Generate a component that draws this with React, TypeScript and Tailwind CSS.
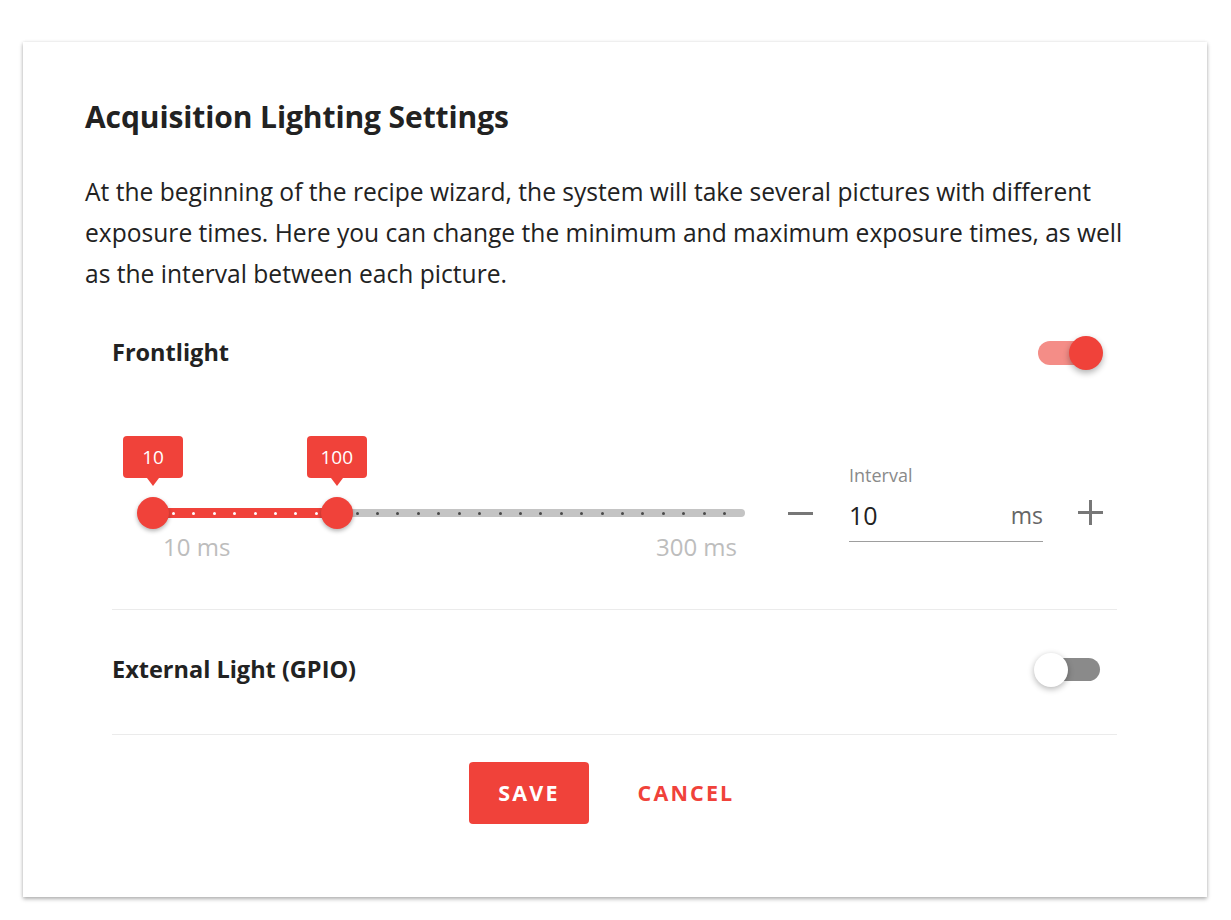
import React from "react";

const MIN = 10;
const MAX = 300;
const STEP = 10;
const LOW = 10;
const HIGH = 100;
const TRACK_W = 592;

function pos(v: number) {
  return ((v - MIN) / (MAX - MIN)) * TRACK_W;
}

function Tip({ value }: { value: number }) {
  return (
    <div
      className="absolute top-0 flex flex-col items-center"
      style={{ left: pos(value) - 30 }}
    >
      <div className="flex h-[42px] w-[60px] items-center justify-center rounded-[4px] bg-[#f0423a] text-[19px] leading-none text-white">
        {value}
      </div>
      <div className="h-0 w-0 border-x-[6px] border-t-[8px] border-x-transparent border-t-[#f0423a]" />
    </div>
  );
}

function Thumb({ value }: { value: number }) {
  return (
    <div
      className="absolute top-[61px] h-[32px] w-[32px] rounded-full bg-[#f0423a] shadow-[0_2px_4px_rgba(0,0,0,0.3)]"
      style={{ left: pos(value) - 16 }}
    />
  );
}

function RangeSlider() {
  const steps = (MAX - MIN) / STEP;
  const dots = [];
  for (let k = 1; k < steps; k++) {
    const v = MIN + k * STEP;
    const inRange = v > LOW && v < HIGH;
    dots.push(
      <div
        key={k}
        className={
          inRange
            ? "absolute top-[75.5px] h-[3px] w-[3px] rounded-full bg-white"
            : "absolute top-[75.5px] h-[3px] w-[3px] rounded-full bg-[#4a4a4a]"
        }
        style={{ left: pos(v) - 1.5 }}
      />
    );
  }
  return (
    <div className="relative ml-[41px] h-[124px] w-[592px] shrink-0">
      <div className="absolute left-0 top-[73px] h-[8px] w-[592px] rounded-full bg-[#c4c4c4]" />
      <div
        className="absolute top-[72px] h-[10px] bg-[#f0423a]"
        style={{ left: pos(LOW), width: pos(HIGH) - pos(LOW) }}
      />
      {dots}
      <Tip value={LOW} />
      <Tip value={HIGH} />
      <Thumb value={LOW} />
      <Thumb value={HIGH} />
      <div className="absolute left-[10px] top-[97px] text-[24px] leading-[28px] text-[#bdbdbd]">
        10 ms
      </div>
      <div className="absolute right-[8px] top-[97px] text-[24px] leading-[28px] text-[#bdbdbd]">
        300 ms
      </div>
    </div>
  );
}

function ToggleOn() {
  return (
    <div className="relative h-[34px] w-[65px]">
      <div className="absolute left-0 top-[5px] h-[24px] w-[58px] rounded-full bg-[#f48d87]" />
      <div className="absolute right-0 top-0 h-[34px] w-[34px] rounded-full bg-[#f0423a] shadow-[0_3px_6px_rgba(0,0,0,0.3)]" />
    </div>
  );
}

function ToggleOff() {
  return (
    <div className="relative h-[34px] w-[66px]">
      <div className="absolute right-0 top-[5px] h-[23px] w-[58px] rounded-full bg-[#8a8a8a]" />
      <div className="absolute left-0 top-0 h-[34px] w-[34px] rounded-full bg-white shadow-[0_2px_6px_rgba(0,0,0,0.3)]" />
    </div>
  );
}

export default function App() {
  return (
    <div
      className="min-h-[920px] bg-white px-[23px] pt-[42px]"
      style={{ fontFamily: "'Open Sans', Lato, sans-serif" }}
    >
      <div className="h-[855px] w-[1184px] bg-white px-[62px] pt-[57px] shadow-[0_2px_4px_rgba(0,0,0,0.3),0_0_3px_rgba(0,0,0,0.08)]">
        <h1 className="text-[30px] font-bold leading-[36px] tracking-[-0.1px] text-[#222]">
          Acquisition Lighting Settings
        </h1>
        <p className="mt-[36px] whitespace-nowrap text-[24.6px] leading-[41px] text-[#222]">
          At the beginning of the recipe wizard, the system will take several pictures with different
          <br />
          exposure times. Here you can change the minimum and maximum exposure times, as well
          <br />
          as the interval between each picture.
        </p>
        <div className="pl-[27px] pr-[28px]">
          <div className="mt-[39px] flex h-[40px] items-center justify-between">
            <span className="text-[23.5px] font-bold text-[#222]">Frontlight</span>
            <div className="mr-[14px]">
              <ToggleOn />
            </div>
          </div>
          <div className="mt-[63px] flex items-start">
            <RangeSlider />
            <div className="ml-[43px] mt-[76px] h-[3px] w-[25px] bg-[#777]" />
            <div className="ml-[36px] mt-[27px] w-[194px]">
              <div className="text-[18px] leading-[24px] text-[#8a8a8a]">Interval</div>
              <div className="mt-[12px] flex items-center justify-between border-b border-[#9e9e9e] pb-[10px]">
                <span className="text-[25px] leading-[32px] text-[#222]">10</span>
                <span className="text-[23px] leading-[32px] text-[#666]">ms</span>
              </div>
            </div>
            <svg className="ml-[35px] mt-[64px]" width="25" height="25" viewBox="0 0 25 25">
              <rect x="0" y="11" width="25" height="3" fill="#777" />
              <rect x="11" y="0" width="3" height="25" fill="#777" />
            </svg>
          </div>
          <div className="mt-[49px] h-px bg-[#ebebeb]" />
          <div className="mt-[40px] flex h-[40px] items-center justify-between">
            <span className="text-[23.5px] font-bold text-[#222]">External Light (GPIO)</span>
            <div className="mr-[17px]">
              <ToggleOff />
            </div>
          </div>
          <div className="mt-[44px] h-px bg-[#ebebeb]" />
        </div>
        <div className="mt-[27px] flex justify-center gap-[22px]">
          <button className="flex h-[62px] w-[120px] items-center justify-center rounded-[4px] bg-[#f0423a] text-[21.5px] font-bold tracking-[0.1em] text-white">
            SAVE
          </button>
          <button className="flex h-[62px] w-[150px] items-center justify-center text-[21.5px] font-bold tracking-[0.1em] text-[#f0423a]">
            CANCEL
          </button>
        </div>
      </div>
    </div>
  );
}
